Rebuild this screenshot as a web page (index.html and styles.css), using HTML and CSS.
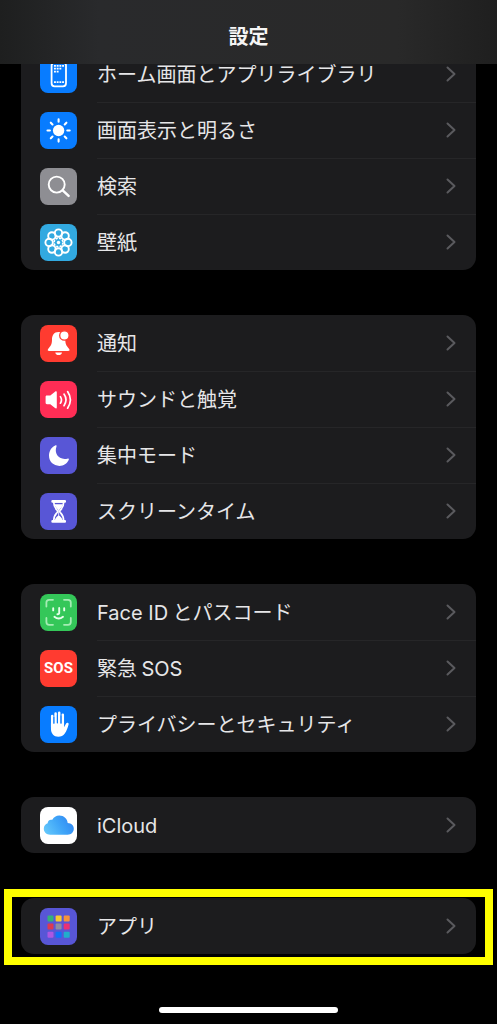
FILE: index.html
```html
<!DOCTYPE html>
<html lang="ja">
<head>
    <meta charset="UTF-8">
    <meta name="viewport" content="width=device-width, initial-scale=1.0">
    <title>設定</title>
    <link rel="stylesheet" href="styles.css">
</head>
<body>

    <svg class="defs" aria-hidden="true">
        <symbol id="chevron" viewBox="0 0 10 16">
            <path d="M1.5 1.5 L8.5 8 L1.5 14.5" fill="none" stroke="currentColor" stroke-width="2" stroke-linecap="round" stroke-linejoin="round"/>
        </symbol>
    </svg>

    <header class="navbar">
        <h1>設定</h1>
    </header>

    <main class="settings">
        <ul class="group">
            <li><a class="row" href="#home">
                <svg class="icon blue" viewBox="0 0 37 37" aria-hidden="true">
                    <rect x="11.6" y="6.5" width="14.4" height="23.8" rx="3" fill="none" stroke="#fff" stroke-width="1.8"/>
                    <g stroke="#fff" stroke-width="1.8" stroke-dasharray="1.9 0.8">
                        <path d="M14 9.8h10M14 12.7h7.4M14 15.6h4.6M14 26.2h10"/>
                    </g>
                </svg>
                <span class="label">ホーム画面とアプリライブラリ</span>
                <svg class="chevron" aria-hidden="true"><use href="#chevron"/></svg>
            </a></li>
            <li><a class="row" href="#display">
                <svg class="icon blue" viewBox="0 0 37 37" aria-hidden="true">
                    <circle cx="18.6" cy="18.5" r="5.7" fill="#fff"/>
                    <path d="M18.6 7.4v2.4M18.6 27.2v2.4M7.5 18.5h2.4M27.3 18.5h2.4M10.8 10.7l1.7 1.7M24.7 24.6l1.7 1.7M10.8 26.3l1.7-1.7M24.7 12.4l1.7-1.7" stroke="#fff" stroke-width="2.1" stroke-linecap="round"/>
                </svg>
                <span class="label">画面表示と明るさ</span>
                <svg class="chevron" aria-hidden="true"><use href="#chevron"/></svg>
            </a></li>
            <li><a class="row" href="#search">
                <svg class="icon gray" viewBox="0 0 37 37" aria-hidden="true">
                    <circle cx="16.7" cy="16.6" r="8" fill="none" stroke="#fff" stroke-width="1.9"/>
                    <path d="M22.7 22.4L28.6 27.8" stroke="#fff" stroke-width="2.5" stroke-linecap="round"/>
                </svg>
                <span class="label">検索</span>
                <svg class="chevron" aria-hidden="true"><use href="#chevron"/></svg>
            </a></li>
            <li><a class="row" href="#wallpaper">
                <svg class="icon cyan" viewBox="0 0 37 37" aria-hidden="true">
                    <g fill="none" stroke="#fff" stroke-width="1.9">
                        <circle cx="18.5" cy="9.1" r="3.7"/>
                        <circle cx="25.1" cy="11.9" r="3.7"/>
                        <circle cx="27.9" cy="18.5" r="3.7"/>
                        <circle cx="25.1" cy="25.1" r="3.7"/>
                        <circle cx="18.5" cy="27.9" r="3.7"/>
                        <circle cx="11.9" cy="25.1" r="3.7"/>
                        <circle cx="9.1" cy="18.5" r="3.7"/>
                        <circle cx="11.9" cy="11.9" r="3.7"/>
                    </g>
                    <circle cx="18.5" cy="18.5" r="4.4" fill="none" stroke="#fff" stroke-width="1.6" stroke-dasharray="2.2 1.25"/>
                    <circle cx="18.5" cy="18.5" r="1.7" fill="#fff"/>
                </svg>
                <span class="label">壁紙</span>
                <svg class="chevron" aria-hidden="true"><use href="#chevron"/></svg>
            </a></li>
        </ul>

        <ul class="group">
            <li><a class="row" href="#notifications">
                <svg class="icon red" viewBox="0 0 37 37" aria-hidden="true">
                    <path d="M18.6 7C13.8 7 12 10.6 12 14.6C12 19.9 10.6 21.2 8.3 23.7C7.2 25 7.8 26 9.2 26H28.1C29.5 26 30.1 25 29 23.7C26.7 21.2 25.3 19.9 25.3 14.6C25.3 10.6 23.4 7 18.6 7Z" fill="#fff"/>
                    <path d="M15.3 27.4H22C21.6 29.2 20.4 30.1 18.6 30.1S15.7 29.2 15.3 27.4Z" fill="#fff"/>
                    <circle cx="24.4" cy="10.5" r="4.7" fill="#fff" stroke="#ff3b30" stroke-width="1.3"/>
                </svg>
                <span class="label">通知</span>
                <svg class="chevron" aria-hidden="true"><use href="#chevron"/></svg>
            </a></li>
            <li><a class="row" href="#sounds">
                <svg class="icon pink" viewBox="0 0 37 37" aria-hidden="true">
                    <path d="M7 14.6H10.3L15 10.8C16 10 16.8 10.3 16.8 11.6V26.2C16.8 27.5 16 27.8 15 27L10.3 23.2H7C6.1 23.2 5.6 22.7 5.6 21.8V16C5.6 15.1 6.1 14.6 7 14.6Z" fill="#fff"/>
                    <path d="M20.4 15.6Q22.6 18.9 20.4 22.2M24 13.1Q28 18.9 24 24.7M27.6 10.6Q33.2 18.9 27.6 27.2" fill="none" stroke="#fff" stroke-width="1.7" stroke-linecap="round"/>
                </svg>
                <span class="label">サウンドと触覚</span>
                <svg class="chevron" aria-hidden="true"><use href="#chevron"/></svg>
            </a></li>
            <li><a class="row" href="#focus">
                <svg class="icon indigo" viewBox="0 0 37 37" aria-hidden="true">
                    <path d="M15.2 8.4C16.1 8 16.9 8.6 16.5 9.6C13.9 16.5 18.6 23.5 27.4 21.7C28.6 21.4 29.2 22 28.7 23C26.9 26.7 23.7 28.9 19.4 28.9C13.4 28.9 9 24.6 9 18.6C9 14 11.3 10.2 15.2 8.4Z" fill="#fff"/>
                </svg>
                <span class="label">集中モード</span>
                <svg class="chevron" aria-hidden="true"><use href="#chevron"/></svg>
            </a></li>
            <li><a class="row" href="#screentime">
                <svg class="icon indigo" viewBox="0 0 37 37" aria-hidden="true">
                    <path d="M12.6 8.4H24.8M12.6 28.4H24.8" stroke="#fff" stroke-width="2.6" stroke-linecap="round"/>
                    <path d="M13.7 9C13.7 14.2 15.4 15.3 17.2 17.3Q18 18.4 17.2 19.5C15.4 21.5 13.7 22.6 13.7 28H23.7C23.7 22.6 22 21.5 20.2 19.5Q19.4 18.4 20.2 17.3C22 15.3 23.7 14.2 23.7 9Z" fill="none" stroke="#fff" stroke-width="1.7"/>
                    <path d="M14.5 11.2H22.9C22.3 14.2 20.3 15.4 19.1 17.2V22.4C20.2 23.5 22 24.6 22.5 27H14.9C15.4 24.6 17.2 23.5 18.3 22.4V17.2C17.1 15.4 15.1 14.2 14.5 11.2Z" fill="#fff"/>
                </svg>
                <span class="label">スクリーンタイム</span>
                <svg class="chevron" aria-hidden="true"><use href="#chevron"/></svg>
            </a></li>
        </ul>

        <ul class="group">
            <li><a class="row" href="#faceid">
                <svg class="icon green" viewBox="0 0 37 37" aria-hidden="true">
                    <path d="M6.4 12.5V8.5Q6.4 5.8 9.2 5.8H13M24 5.8H28Q30.8 5.8 30.8 8.5V12.5M30.8 24V28Q30.8 30.8 28 30.8H24M13 30.8H9.2Q6.4 30.8 6.4 28V24" fill="none" stroke="#a5ecb4" stroke-width="1.8" stroke-linecap="round"/>
                    <path d="M13.2 14.2V16.4M24.2 14.2V16.4M19.2 13.9V19Q19.2 20.2 17.4 20.2M14.4 22.8Q18.7 26.4 23 22.8" fill="none" stroke="#e8ffec" stroke-width="1.9" stroke-linecap="round"/>
                </svg>
                <span class="label"><span class="latin">Face ID</span> とパスコード</span>
                <svg class="chevron" aria-hidden="true"><use href="#chevron"/></svg>
            </a></li>
            <li><a class="row" href="#sos">
                <span class="icon red sos" aria-hidden="true">SOS</span>
                <span class="label">緊急 <span class="latin">SOS</span></span>
                <svg class="chevron" aria-hidden="true"><use href="#chevron"/></svg>
            </a></li>
            <li><a class="row" href="#privacy">
                <svg class="icon blue" viewBox="0 0 37 37" aria-hidden="true">
                    <path d="M12.2 10V21M15.6 7.6V20M19.2 6.8V20M22.8 8.8V21" stroke="#fff" stroke-width="2.5" stroke-linecap="round"/>
                    <path d="M10.95 17H24.05V21.2L26.1 17.6C26.9 16.1 29.1 16.7 28.6 18.6C27.6 22 26.7 25 24.8 27.6C23.2 29.8 21 30.8 18.3 30.8C13.8 30.8 10.95 27.4 10.95 22.8Z" fill="#fff"/>
                    <path d="M13.9 11V18M17.4 9V17.5M21 9.5V18" stroke="#087cff" stroke-width="0.9"/>
                </svg>
                <span class="label">プライバシーとセキュリティ</span>
                <svg class="chevron" aria-hidden="true"><use href="#chevron"/></svg>
            </a></li>
        </ul>

        <ul class="group">
            <li><a class="row" href="#icloud">
                <svg class="icon white" viewBox="0 0 37 37" aria-hidden="true">
                    <defs>
                        <linearGradient id="cloud" x1="0" y1="0.7" x2="1" y2="0.3">
                            <stop offset="0" stop-color="#62c6fb"/>
                            <stop offset="0.5" stop-color="#40a6f8"/>
                            <stop offset="1" stop-color="#2f86f2"/>
                        </linearGradient>
                    </defs>
                    <path d="M10.2 27.7C6.5 27.7 3.8 25.2 3.8 21.8C3.8 18.9 5.5 17 7.7 16.3C7.6 13.6 9.8 12.1 12.3 12.8C13.6 10 16.2 8.4 19.3 8.4C23.9 8.4 27.4 11.6 27.7 16C31.4 16.1 33.8 18.5 33.8 21.8C33.8 25.2 31.3 27.7 27.6 27.7Z" fill="url(#cloud)"/>
                </svg>
                <span class="label"><span class="latin">iCloud</span></span>
                <svg class="chevron" aria-hidden="true"><use href="#chevron"/></svg>
            </a></li>
        </ul>

        <ul class="group highlight">
            <li><a class="row" href="#apps">
                <svg class="icon indigo" viewBox="0 0 37 37" aria-hidden="true">
                    <rect x="7.5" y="7.5" width="6" height="6" rx="1" fill="#34b27a"/>
                    <rect x="15.6" y="7.5" width="6" height="6" rx="1" fill="#f7c92f"/>
                    <rect x="23.7" y="7.5" width="6" height="6" rx="1" fill="#f5923c"/>
                    <rect x="7.5" y="15.6" width="6" height="6" rx="1" fill="#dc3a50"/>
                    <rect x="15.6" y="15.6" width="6" height="6" rx="1" fill="#8e8ea0"/>
                    <rect x="23.7" y="15.6" width="6" height="6" rx="1" fill="#ea3074"/>
                    <rect x="7.5" y="23.7" width="6" height="6" rx="1" fill="#ac57e2"/>
                    <rect x="15.6" y="23.7" width="6" height="6" rx="1" fill="#1172f7"/>
                    <rect x="23.7" y="23.7" width="6" height="6" rx="1" fill="#20adcb"/>
                </svg>
                <span class="label">アプリ</span>
                <svg class="chevron" aria-hidden="true"><use href="#chevron"/></svg>
            </a></li>
        </ul>
    </main>

    <div class="home-bar"></div>

</body>
</html>
```
FILE: styles.css
```css
* {
    box-sizing: border-box;
}

body {
    margin: 0;
    min-height: 100vh;
    display: flex;
    flex-direction: column;
    background-color: #000;
    color: #e6e6e8;
    font-family: "Noto Sans CJK JP", sans-serif;
    font-size: 20px;
    line-height: 28px;
}

.defs {
    display: none;
}

.navbar {
    position: sticky;
    top: 0;
    z-index: 1;
    height: 64px;
    padding-top: 22px;
    background: linear-gradient(to right, #1e1f1f, #292a2c 20%, #292929 80%, #1f1f1f);
}

h1 {
    margin: 0;
    font-size: 20px;
    font-weight: bold;
    text-align: center;
    color: #f5f5f5;
}

/* 最初のグループはバーの後ろに少し隠れる */
.settings {
    display: flex;
    flex-direction: column;
    gap: 45px;
    margin-top: -18px;
    padding: 0 21px;
}

.group {
    margin: 0;
    padding: 0;
    list-style: none;
    background-color: #1c1c1e;
    border-radius: 13px;
}

.row {
    display: flex;
    align-items: center;
    gap: 20px;
    height: 56px;
    padding-left: 19px;
    color: inherit;
    text-decoration: none;
}

.label {
    flex: 1;
    white-space: nowrap;
}

.latin {
    font-family: Inter, sans-serif;
}

.chevron {
    width: 10px;
    height: 16px;
    margin-right: 20px;
    color: #5a5a5e;
}

.group li + li {
    background: linear-gradient(#262628, #262628) 76px 0 / 100% 1px no-repeat;
}

.icon {
    flex: none;
    width: 37px;
    height: 37px;
    border-radius: 8px;
}

.blue { background-color: #087cff; }
.gray { background-color: #8e8e93; }
.cyan { background-color: #32a9e0; }
.red { background-color: #ff3b30; }
.pink { background-color: #ff2d55; }
.indigo { background-color: #5856d6; }
.green { background-color: #34c759; }
.white { background-color: #fff; }

.sos {
    font-family: Roboto, sans-serif;
    font-size: 15px;
    font-weight: bold;
    line-height: 37px;
    text-align: center;
    color: #fff;
}

.highlight {
    position: relative;
}

.highlight::after {
    content: "";
    position: absolute;
    inset: -9px -17px -11px;
    border: 8px solid #ff0;
    pointer-events: none;
}

.home-bar {
    width: 36%;
    height: 6px;
    margin: auto auto 11px;
    border-radius: 3px;
    background-color: #fff;
}
```
